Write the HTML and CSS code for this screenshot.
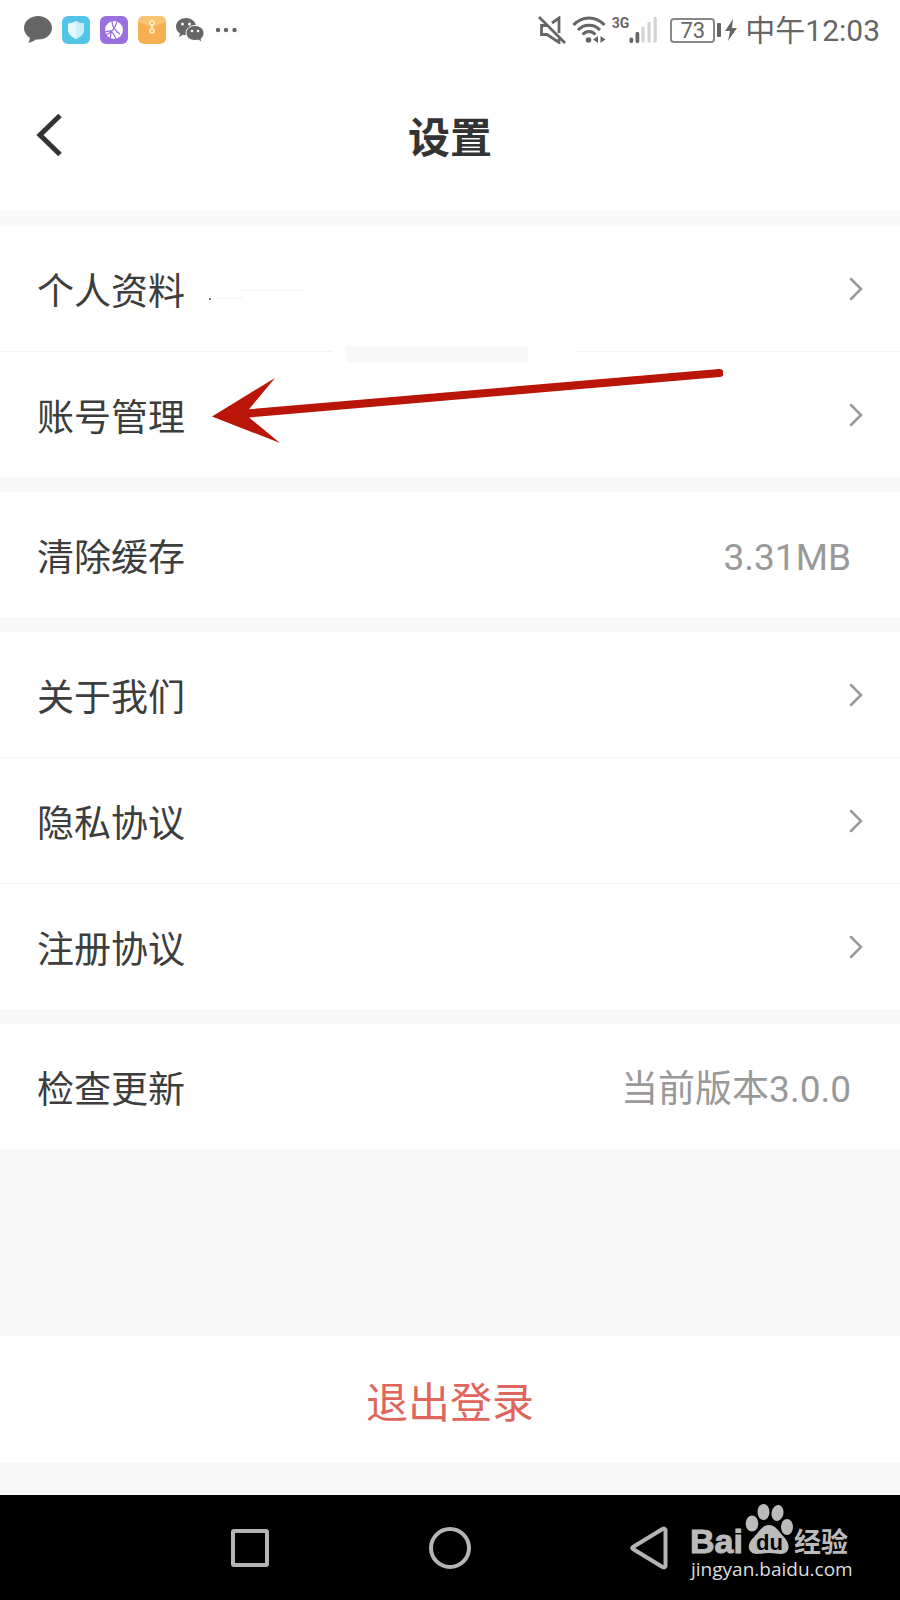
FILE: index.html
```html
<!DOCTYPE html>
<html lang="zh-CN">
<head>
<meta charset="utf-8">
<meta name="viewport" content="width=device-width, initial-scale=1">
<title>设置</title>
<link rel="stylesheet" href="styles.css">
</head>
<body>
<div class="status">
  <div class="status-apps">
    <svg width="28" height="28" viewBox="0 0 28 28" fill="#666"><path d="M14 0C6.300 0 0 5.200 0 12c0 4 2.200 7.600 5.800 9.800 0 2-.5 3.700-1.400 5.200 3-.8 5.600-2.200 7.600-3.500 9 .8 16-4.500 16-11.500C28 5.200 21.700 0 14 0z"/></svg>
    <svg width="28" height="28" viewBox="0 0 28 28"><rect width="28" height="28" rx="6" fill="#51c4e8"/><path d="M14 5c2.500 1.500 5 2.200 8 2.500v6.500c0 4-3.500 7-8 9-4.500-2-8-5-8-9V7.500C9 7.200 11.500 6.500 14 5z" fill="#e5f8fd"/><path d="M14 5c2.500 1.500 5 2.200 8 2.500v6.500c0 4-3.500 7-8 9z" fill="#c9eef9"/></svg>
    <svg width="28" height="28" viewBox="0 0 28 28"><rect width="28" height="28" rx="6" fill="#9b6fdd"/><circle cx="14" cy="14" r="9" fill="#fff"/><path d="M12 5c0 5 2 9 8 13M5 16c5-2 8-1 11 7M6 19c6-3 8-5 11-13M11 14c0 4 0 6-1 9" fill="none" stroke="#9b6fdd" stroke-width="1.300"/></svg>
    <svg width="28" height="28" viewBox="0 0 28 28"><rect width="28" height="28" rx="6" fill="#f5b052"/><path d="M0 6a6 6 0 0 1 6-6h16a6 6 0 0 1 6 6l-14 5z" fill="#f9c474"/><path d="M14 7v8" stroke="#fff2d8" stroke-width="1.500"/><circle cx="14" cy="7" r="2" fill="#f5b052" stroke="#fff2d8" stroke-width="1.500"/><circle cx="14" cy="15" r="2" fill="#f5b052" stroke="#fff2d8" stroke-width="1.500"/></svg>
    <svg width="28" height="28" viewBox="0 0 28 28"><path d="M10 2C4.500 2 0 5.800 0 10.500c0 3 1.500 5.300 4 7L3 21l4-2.200c1 .2 2 .3 3 .2C16 19 20 15 20 10.500S15.500 2 10 2z" fill="#666"/><path d="M19 9.500c-5 0-9 3.300-9 7.500s4 7.500 9 7.500c1 0 2-.1 3-.4l4 2-1-3.300c2-1.500 3-3.500 3-5.800 0-4.200-4-7.500-9-7.500z" fill="#666" stroke="#fff"/><g fill="#fff"><circle cx="6.500" cy="8" r="1.500"/><circle cx="13.500" cy="8" r="1.500"/><circle cx="16" cy="15" r="1.300"/><circle cx="22" cy="15" r="1.300"/></g></svg>
    <svg width="28" height="28" viewBox="0 0 28 28" fill="#666"><circle cx="4" cy="14" r="2.200"/><circle cx="12" cy="14" r="2.200"/><circle cx="20.500" cy="14" r="2.200"/></svg>
  </div>
  <div class="status-system">
    <svg width="28" height="28" viewBox="0 0 28 28" fill="none" stroke="#666" stroke-width="2.800"><path d="M1 1l26 26M14 7l7-5v15M9 9.500H3.500v9H9l12 8v-4"/></svg>
    <svg width="34" height="28" viewBox="0 0 34 28" fill="none" stroke="#666" stroke-width="3"><path d="M1.500 9C10-.5 24-.5 32.500 9M6 14c6-6.500 16-6.500 22 0M10.500 18.500c4-4 9-4 13 0"/><circle cx="16.500" cy="24" r="2.800" fill="#666" stroke="none"/><path d="M26 20v7l-5-3.500zM28.500 20v7l5-3.500z" fill="#666" stroke="none"/></svg>
    <div class="signal">
      <span class="signal-type">3G</span>
      <svg width="28" height="28" viewBox="0 0 30 28"><path d="M2.500 26v-2M9 26v-8" stroke="#666" stroke-width="4" stroke-linecap="round"/><path d="M15 26V12M21.500 26V7M28 26V1.500" stroke="#d4d4d4" stroke-width="3.500" stroke-linecap="round"/></svg>
    </div>
    <div class="battery"><span class="battery-level">73</span></div>
    <svg class="bolt" width="12" height="24" viewBox="0 0 12 24" fill="#666"><path d="M8 1L0 13h5L3 23l9-13H7z"/></svg>
    <span class="clock">中午12:03</span>
  </div>
</div>

<header class="header">
  <button class="back" type="button" aria-label="返回"><svg width="28" height="44" viewBox="0 0 28 44" fill="none" stroke="#333" stroke-width="5"><path d="M25 2.500L5 22l20 19.500"/></svg></button>
  <h1 class="title">设置</h1>
</header>

<main class="main">
  <section class="group">
    <a class="row" href="#profile"><span class="label">个人资料</span><svg class="chevron" viewBox="0 0 14 24"><path d="M2 2l10 10L2 22"/></svg></a>
    <a class="row" href="#account"><span class="label">账号管理</span><svg class="chevron" viewBox="0 0 14 24"><path d="M2 2l10 10L2 22"/></svg></a>
    <svg class="annotation" width="520" height="170" viewBox="0 0 520 170" aria-hidden="true">
      <path d="M129 73h242v5H129z" fill="#fff"/>
      <rect x="143" y="70" width="182" height="16" rx="2" fill="#f8f8f8"/>
      <path d="M13 22h27M36 14h65" stroke="#f8f8f8" stroke-width="2"/>
      <circle cx="7" cy="23" r="1" fill="#733"/>
      <path d="M9 140.500L72 102 46 133.300 516 93a4 4 0 0 1 1 8L46 141.500 77 167z" fill="#ba1509"/>
    </svg>
  </section>
  <section class="group">
    <button class="row" type="button"><span class="label">清除缓存</span><span class="value">3.31MB</span></button>
  </section>
  <section class="group">
    <a class="row" href="#about"><span class="label">关于我们</span><svg class="chevron" viewBox="0 0 14 24"><path d="M2 2l10 10L2 22"/></svg></a>
    <a class="row" href="#privacy"><span class="label">隐私协议</span><svg class="chevron" viewBox="0 0 14 24"><path d="M2 2l10 10L2 22"/></svg></a>
    <a class="row" href="#terms"><span class="label">注册协议</span><svg class="chevron" viewBox="0 0 14 24"><path d="M2 2l10 10L2 22"/></svg></a>
  </section>
  <section class="group">
    <button class="row" type="button"><span class="label">检查更新</span><span class="value">当前版本3.0.0</span></button>
  </section>
  <button class="logout" type="button">退出登录</button>
</main>

<nav class="navbar">
  <button type="button" aria-label="最近任务"><svg width="44" height="44" viewBox="0 0 44 44"><rect x="5" y="5" width="34" height="34" rx="1"/></svg></button>
  <button type="button" aria-label="主屏幕"><svg width="44" height="44" viewBox="0 0 44 44"><circle cx="22" cy="22" r="19"/></svg></button>
  <button type="button" aria-label="返回"><svg width="44" height="44" viewBox="0 0 44 44"><path d="M37.500 4v36q-1 2-3 1L5 23q-1.500-1 0-2L34.500 3q2-1 3 1z"/></svg></button>
  <svg class="watermark" width="166" height="84" viewBox="0 0 166 84" role="img" aria-label="Baidu经验">
    <g fill="#bbb">
      <ellipse cx="66" cy="23.500" rx="6.300" ry="8"/><ellipse cx="77.500" cy="12" rx="6" ry="8"/><ellipse cx="91.500" cy="13" rx="6" ry="8" transform="rotate(10 91.500 13)"/><ellipse cx="101" cy="27" rx="6" ry="8"/>
      <path d="M83 25c7 0 10 7 15 12 7 7 6 17-3 17-5 0-7-1-12-1s-7 1-12 1c-9 0-11-9-4-16 6-6 9-13 16-13z"/>
      <text class="mark-latin" x="4" y="53">Bai</text>
      <text class="mark-han" x="108" y="52">经验</text>
    </g>
    <text class="mark-du" x="70" y="50">du</text>
    <text class="mark-url" x="5" y="76">jingyan.baidu.com</text>
  </svg>
</nav>
</body>
</html>
```
FILE: styles.css
```css
* { box-sizing: border-box; }

body {
  margin: 0;
  min-height: 100vh;
  display: flex;
  flex-direction: column;
  background: #f9f9f9;
  color: #3d3d3d;
  font-family: Roboto, "Noto Sans CJK SC", sans-serif;
}

button {
  margin: 0;
  padding: 0;
  border: 0;
  background: none;
  color: inherit;
  font: inherit;
}

svg { display: block; flex: none; }

.status {
  display: flex;
  justify-content: space-between;
  align-items: center;
  height: 60px;
  padding: 0 20px 0 24px;
  background: #fff;
  color: #666;
}

.status-apps { display: flex; gap: 10px; }
.status-system { display: flex; align-items: center; gap: 6px; }
.signal { display: flex; }
.signal-type { font-size: 14px; font-weight: 700; line-height: 14px; }

.battery {
  display: flex;
  align-items: center;
  gap: 2px;
  margin-left: 7px;
}
.battery-level {
  width: 45px;
  border: 2px solid #888;
  border-radius: 4px;
  font-size: 22px;
  line-height: 21px;
  text-align: center;
}
.battery::after {
  content: "";
  width: 4px;
  height: 14px;
  border-radius: 1px;
  background: #666;
}
.bolt { margin: 0 2px 0 -2px; }
.clock { padding-top: 2px; font-size: 30px; line-height: 40px; }

.header {
  display: grid;
  grid-template-columns: 1fr auto 1fr;
  align-items: center;
  height: 150px;
  padding: 0 35px;
  background: #fff;
  color: #333;
}
.back { justify-self: start; }
.title { margin: 0; padding-top: 8px; font-size: 42px; font-weight: 700; line-height: 60px; }

.main {
  flex: 1;
  display: flex;
  flex-direction: column;
  gap: 15px;
  padding: 16px 0 32px;
}

.group {
  position: relative;
  display: flex;
  flex-direction: column;
  gap: 1px;
  background: #f4f4f4;
}

.row {
  display: flex;
  justify-content: space-between;
  align-items: center;
  width: 100%;
  height: 125px;
  padding: 0 37px;
  background: #fff;
  color: #3d3d3d;
  font-size: 37px;
  line-height: 54px;
  text-align: left;
  text-decoration: none;
}
.label { padding-top: 8px; }
.value { padding: 6px 12px 0 0; color: #999; }

.chevron {
  width: 14px;
  height: 24px;
  fill: none;
  stroke: #999;
  stroke-width: 2.5;
  stroke-linecap: round;
}

.annotation {
  position: absolute;
  left: 203px;
  top: 50px;
  pointer-events: none;
}

.logout {
  height: 127px;
  margin-top: auto;
  background: #fff;
  color: #df665c;
  font-size: 42px;
}

.navbar {
  position: relative;
  display: grid;
  grid-template-columns: repeat(3, 1fr);
  place-items: center;
  height: 105px;
  padding: 0 16.67%;
  background: #000;
}
.navbar button svg { fill: none; stroke: #b5b5b5; stroke-width: 4; }

.watermark { position: absolute; right: 48px; top: 5px; }
.mark-latin { font: 700 34px "Liberation Sans", sans-serif; stroke: #bbb; }
.mark-du { font: 700 22px "Liberation Sans", sans-serif; fill: #000; }
.mark-han { font: 700 27px "Noto Sans CJK SC", sans-serif; }
.mark-url { font: 19px "Open Sans", sans-serif; fill: #ddd; }
```
